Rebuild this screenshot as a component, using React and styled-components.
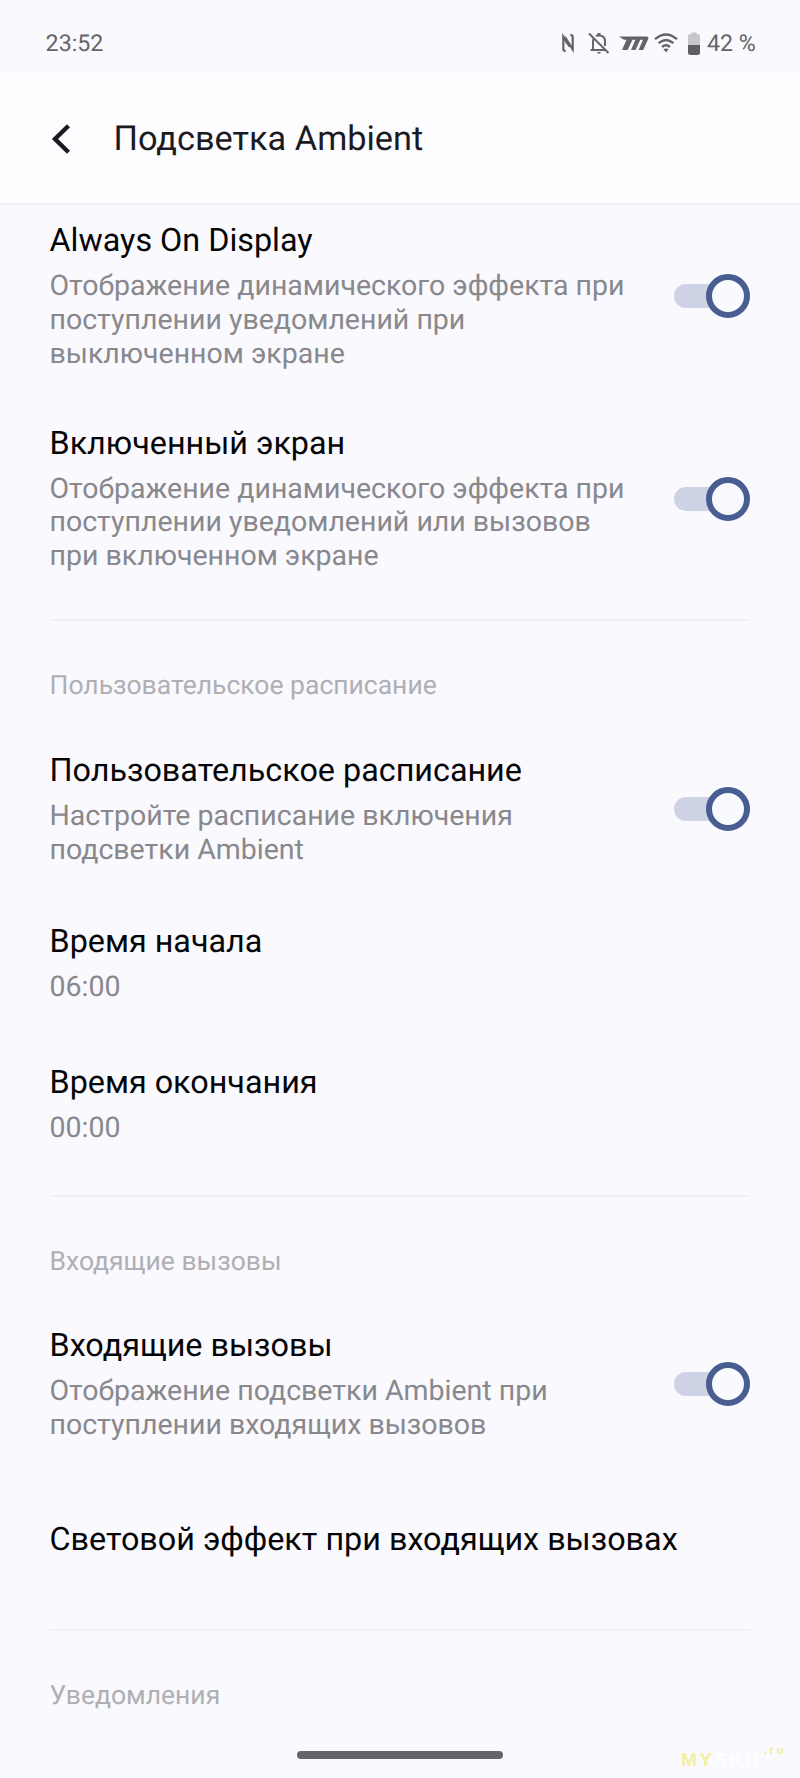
import styled, { createGlobalStyle } from "styled-components"

const GlobalStyle = createGlobalStyle`
    * {
        box-sizing: border-box;
    }
    body {
        margin: 0;
        background-color: #F9F9FE;
        font-family: Roboto, "Noto Sans", sans-serif;
        text-rendering: geometricPrecision;
    }
`

const Screen = styled.div`
    width: 800px;
    height: 1778px;
    display: flex;
    flex-direction: column;
    position: relative;
    overflow: hidden;
    background-color: #F9F9FE;
`

const StatusBar = styled.div`
    height: 73px;
    flex-shrink: 0;
    padding: 13px 45px 0 45.6px;
    display: flex;
    align-items: center;
    justify-content: space-between;
    color: #646468;
    font-size: 23.2px;
`

const StatusIcons = styled.div`
    display: flex;
    align-items: center;
`

const StatusIcon = styled.svg`
    display: block;
    flex-shrink: 0;
    margin-right: ${ (props) => props.$gap }px;
`

const BatteryLevel = styled.span`
    width: 48px;
    white-space: nowrap;
`

const Header = styled.header`
    height: 132px;
    flex-shrink: 0;
    padding: 1px 0 0 50px;
    display: flex;
    align-items: center;
    gap: 43.5px;
    background-color: #FDFCFF;
    border-bottom: 2px solid #F2F1F5;
`

const HeaderTitle = styled.h1`
    margin: 0;
    color: #1B1B1F;
    font-size: 34.3px;
    font-weight: 400;
    line-height: 40px;
`

const List = styled.main`
    padding: 17px 50px 0 49.5px;
    display: flex;
    flex-direction: column;
`

const Row = styled.div`
    display: flex;
    align-items: center;
    justify-content: space-between;
    margin-bottom: ${ (props) => props.$space }px;
`

const RowText = styled.div`
    display: flex;
    flex-direction: column;
    gap: 11px;
`

const RowTitle = styled.div`
    color: #050507;
    font-size: 32.35px;
    line-height: 36px;
    white-space: nowrap;
`

const RowSummary = styled.div`
    color: #88888D;
    font-size: 28.5px;
    line-height: 33.75px;
    white-space: pre;
`

const Divider = styled.div`
    height: 2px;
    background-color: #F0F0F5;
`

const SectionLabel = styled.div`
    margin: 49px 0 49.5px;
    color: #AFAFB4;
    font-size: 26.5px;
    line-height: 32px;
`

const SwitchTrack = styled.div`
    width: 76px;
    height: 24px;
    flex-shrink: 0;
    display: flex;
    align-items: center;
    justify-content: flex-end;
    border-radius: 12px;
    background-color: #CDD2E5;
`

const SwitchThumb = styled.div`
    width: 44px;
    height: 44px;
    flex-shrink: 0;
    border: 6px solid #485D92;
    border-radius: 50%;
    background-color: #F9FAFE;
`

const HomeIndicator = styled.div`
    width: 206px;
    height: 8px;
    position: absolute;
    left: 297px;
    bottom: 19px;
    border-radius: 4px;
    background-color: #666668;
`

const Watermark = styled.div`
    position: absolute;
    left: 681px;
    bottom: 6px;
    display: flex;
    color: #FFFFFF;
    font-family: "Liberation Sans", Arial, sans-serif;
    font-size: 19px;
    font-weight: 700;
    line-height: 22px;
    letter-spacing: 2.4px;
`

const WatermarkAccent = styled.span`
    color: #F0F0A0;
`

const WatermarkDomain = styled.span`
    margin: -5px 0 0 2px;
    color: #F0F0A0;
    font-size: 12px;
    line-height: 10px;
    letter-spacing: 2.4px;
`

function NfcIcon() {
  return (
    <StatusIcon width="12" height="20" viewBox="0 0 12 20" $gap={14} fill="none" stroke="#646468" strokeWidth="2.2">
        <path d="M3.4 18.6 1.3 16.8V3.6L7.6 13.6" />
        <path d="M8.6 1.4 10.7 3.2V16.4L4.4 6.4V10.5" />
    </StatusIcon>
  )
}

function BellOffIcon() {
  return (
    <StatusIcon width="22" height="22" viewBox="0 0 22 22" $gap={9} fill="none" stroke="#646468" strokeWidth="2">
        <path d="M1 1.5 20.5 21" />
        <path d="M2.5 18H17M5 17V9.5Q5 7.8 5.7 6.5M8 4.2Q9.2 3.3 11 3.3 17 3.8 17 9.5V14" />
        <path d="M11 1V3.5" strokeWidth="3" />
        <path d="M9 20H13Q12.7 21.7 11 21.7 9.3 21.7 9 20Z" fill="#646468" stroke="none" />
    </StatusIcon>
  )
}

function CarrierIcon() {
  return (
    <StatusIcon width="30" height="15" viewBox="0 0 30 15" $gap={5} fill="#646468">
        <path d="M0 0.5H27.5Q30 0.5 29.2 3L24.2 14H19.6L24 3.8H21.2L16.5 14H12L16.4 3.8H13.5L8.6 14H3L7.6 3.8H5Z" />
    </StatusIcon>
  )
}

function WifiIcon() {
  return (
    <StatusIcon width="24" height="20" viewBox="0 0 24 20" $gap={10} fill="none" stroke="#646468" strokeWidth="2.4">
        <path d="M1 6.2Q12-3.4 23 6.2M4.6 10.2Q12 3.8 19.4 10.2M8.1 14Q12 10.7 15.9 14" />
        <path d="M9.3 16.3Q12 14.6 14.7 16.3L12 19.3Z" fill="#646468" stroke="none" />
    </StatusIcon>
  )
}

function BatteryIcon() {
  return (
    <StatusIcon width="12" height="23" viewBox="0 0 12 23" $gap={7}>
        <path d="M3.5 0.5H8.5V2H9.5Q12 2 12 4.5V13H0V4.5Q0 2 2.5 2H3.5Z" fill="#C7C6CB" />
        <path d="M0 13H12V20.5Q12 23 9.5 23H2.5Q0 23 0 20.5Z" fill="#5E5E62" />
    </StatusIcon>
  )
}

function BackIcon() {
  return (
    <svg width="20" height="30" viewBox="0 0 20 30" fill="none" stroke="#1B1B1F" strokeWidth="4.4">
        <path d="M18.5 1.7 5 15 18.5 28.3" />
    </svg>
  )
}

function SettingRow({ title, summary, checked, space }) {
  return (
    <Row $space={space}>
        <RowText>
            <RowTitle>{title}</RowTitle>
            {summary && <RowSummary>{summary}</RowSummary>}
        </RowText>
        {checked && (
            <SwitchTrack role="switch" aria-checked="true">
                <SwitchThumb />
            </SwitchTrack>
        )}
    </Row>
  )
}

export default function App() {
  return (
    <Screen>
        <GlobalStyle />
        <StatusBar>
            <span>23:52</span>
            <StatusIcons>
                <NfcIcon />
                <BellOffIcon />
                <CarrierIcon />
                <WifiIcon />
                <BatteryIcon />
                <BatteryLevel>42 %</BatteryLevel>
            </StatusIcons>
        </StatusBar>
        <Header>
            <BackIcon />
            <HeaderTitle>Подсветка Ambient</HeaderTitle>
        </Header>
        <List>
            <SettingRow
                title="Always On Display"
                summary={"Отображение динамического эффекта при\nпоступлении уведомлений при\nвыключенном экране"}
                checked
                space={54.4}
            />
            <SettingRow
                title="Включенный экран"
                summary={"Отображение динамического эффекта при\nпоступлении уведомлений или вызовов\nпри включенном экране"}
                checked
                space={46.4}
            />
            <Divider />
            <SectionLabel>Пользовательское расписание</SectionLabel>
            <SettingRow
                title="Пользовательское расписание"
                summary={"Настройте расписание включения\nподсветки Ambient"}
                checked
                space={56.5}
            />
            <SettingRow title="Время начала" summary="06:00" space={60.2} />
            <SettingRow title="Время окончания" summary="00:00" space={50.2} />
            <Divider />
            <SectionLabel>Входящие вызовы</SectionLabel>
            <SettingRow
                title="Входящие вызовы"
                summary={"Отображение подсветки Ambient при\nпоступлении входящих вызовов"}
                checked
                space={79.5}
            />
            <SettingRow title="Световой эффект при входящих вызовах" space={71.5} />
            <Divider />
            <SectionLabel>Уведомления</SectionLabel>
        </List>
        <HomeIndicator />
        <Watermark>
            <WatermarkAccent>MY</WatermarkAccent>
            <span>SKU</span>
            <WatermarkDomain>.ru</WatermarkDomain>
        </Watermark>
    </Screen>
  )
}
